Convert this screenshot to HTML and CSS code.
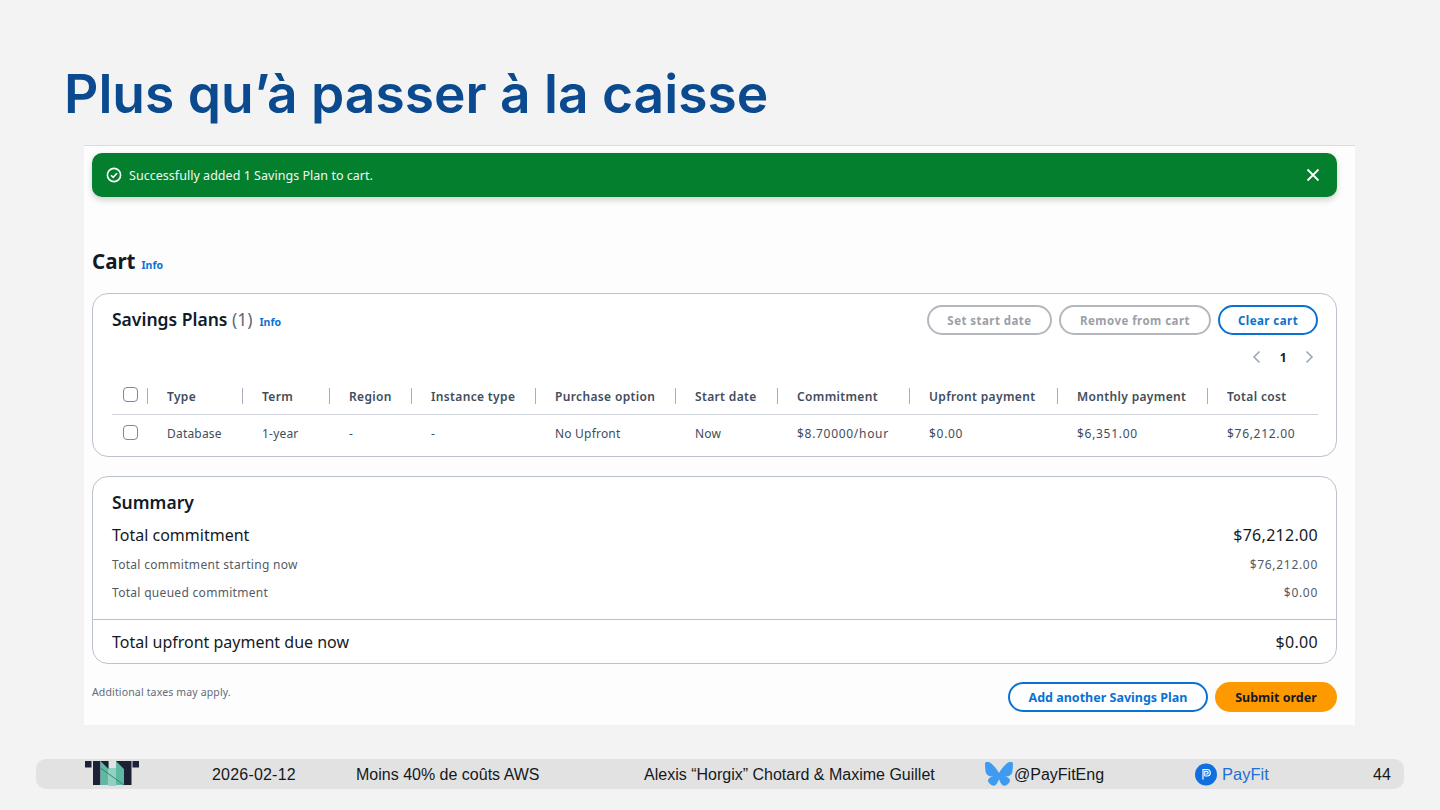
FILE: index.html
```html
<!DOCTYPE html>
<html lang="fr">
<head>
<meta charset="utf-8">
<title>Plus qu’à passer à la caisse</title>
<link rel="stylesheet" href="styles.css">
</head>
<body>
<div class="slide">
  <h1 class="title">Plus qu’à passer à la caisse</h1>
  <main class="shot">
    <div class="flash">
      <svg class="flash-icon" width="16" height="16" viewBox="0 0 16 16" fill="none" stroke="#fff" stroke-width="1.6"><circle cx="8" cy="8" r="6.6"/><path d="M5 8.2l2.2 2.2L11 6.2"/></svg>
      <span class="flash-text">Successfully added 1 Savings Plan to cart.</span>
      <svg class="flash-close" width="14" height="14" viewBox="0 0 14 14" fill="none" stroke="#fff" stroke-width="1.8"><path d="M1.5 1.5l11 11M12.5 1.5l-11 11"/></svg>
    </div>
    <div class="page-head"><h2 class="page-title">Cart</h2><a class="info">Info</a></div>
    <section class="panel plans">
      <div class="plans-head">
        <h3 class="plans-title">Savings Plans <span class="count">(1)</span></h3><a class="info info-small">Info</a>
        <div class="actions">
          <button class="btn btn-off btn-a">Set start date</button>
          <button class="btn btn-off btn-b">Remove from cart</button>
          <button class="btn btn-link btn-c">Clear cart</button>
        </div>
      </div>
      <div class="pager">
        <svg width="9" height="14" viewBox="0 0 9 14" fill="none" stroke="#9ba7b6" stroke-width="1.6"><path d="M7.5 1.5L2 7l5.5 5.5"/></svg>
        <span class="page-num">1</span>
        <svg width="9" height="14" viewBox="0 0 9 14" fill="none" stroke="#9ba7b6" stroke-width="1.6"><path d="M1.5 1.5L7 7l-5.5 5.5"/></svg>
      </div>
      <table class="table">
        <colgroup>
          <col class="c0"><col class="c1"><col class="c2"><col class="c3"><col class="c4"><col class="c5"><col class="c6"><col class="c7"><col class="c8"><col class="c9"><col class="c10">
        </colgroup>
        <thead>
          <tr>
            <th class="sel"><span class="box"></span></th>
            <th>Type</th><th>Term</th><th>Region</th><th>Instance type</th><th>Purchase option</th><th>Start date</th><th>Commitment</th><th>Upfront payment</th><th>Monthly payment</th><th>Total cost</th>
          </tr>
        </thead>
        <tbody>
          <tr>
            <td class="sel"><span class="box"></span></td>
            <td>Database</td><td>1-year</td><td>-</td><td>-</td><td>No Upfront</td><td>Now</td><td class="num">$8.70000/hour</td><td class="num">$0.00</td><td class="num">$6,351.00</td><td class="num">$76,212.00</td>
          </tr>
        </tbody>
      </table>
    </section>
    <section class="panel summary">
      <h3 class="summary-title">Summary</h3>
      <div class="line line-big line-first"><span>Total commitment</span><span class="amount">$76,212.00</span></div>
      <div class="line line-small"><span>Total commitment starting now</span><span class="amount-small">$76,212.00</span></div>
      <div class="line line-small line-last"><span>Total queued commitment</span><span class="amount-small">$0.00</span></div>
      <div class="line line-big line-total"><span>Total upfront payment due now</span><span class="amount">$0.00</span></div>
    </section>
    <div class="bottom">
      <span class="taxes">Additional taxes may apply.</span>
      <div class="bottom-actions">
        <button class="btn btn-link btn-d">Add another Savings Plan</button>
        <button class="btn btn-primary">Submit order</button>
      </div>
    </div>
  </main>
  <footer class="foot">
    <svg class="tnt" width="54" height="25" viewBox="0 0 54 25">
      <rect x="0" y="0" width="6.500" height="6.500" fill="#1d2136"/>
      <rect x="8" y="0" width="7.500" height="24" fill="#1d2136"/>
      <rect x="15.500" y="0" width="8" height="24" fill="#5fb9a2"/>
      <rect x="23.500" y="7" width="7.500" height="18" fill="#8fd2bf"/>
      <rect x="31" y="0" width="8" height="24" fill="#5fb9a2"/>
      <rect x="39" y="0" width="7.500" height="24" fill="#1d2136"/>
      <rect x="47.500" y="0" width="6.500" height="6.500" fill="#1d2136"/>
      <path d="M15.500 0h8v8zM31 0h8v8z" fill="#1d2136"/>
      <path d="M15.500 7l23.500 17" stroke="#2f6f66" stroke-width=".8" fill="none"/>
    </svg>
    <span class="foot-date">2026-02-12</span>
    <span>Moins 40% de coûts AWS</span>
    <span>Alexis “Horgix” Chotard &amp; Maxime Guillet</span>
    <span class="foot-item">
      <svg class="fly" width="28" height="25" viewBox="0 0 28 25"><path fill="#3d9bf2" d="M6 1.3c3.200 2.400 6.600 7.200 8 9.800 1.400-2.600 4.800-7.400 8-9.800 2.300-1.700 6-3 6 1.200 0 .8-.5 7-.8 8-1 3.500-4.500 4.400-7.700 3.900 5.500.9 7 4 3.900 7.100-5.800 5.900-8.300-1.500-9-3.400-.1-.3-.2-.5-.4-.5s-.3.200-.4.500c-.7 1.900-3.200 9.300-9 3.400-3.100-3.100-1.600-6.200 3.900-7.100-3.200.5-6.700-.4-7.700-3.900C.5 9.500 0 3.300 0 2.500 0-1.700 3.700-.4 6 1.300z"/></svg>
      @PayFitEng
    </span>
    <span class="foot-item pf">
      <svg width="22" height="23" viewBox="0 0 22 23"><circle cx="11" cy="11.500" r="11" fill="#1170de"/><path d="M8 16.500V6.500h4a3 3 0 010 6.500H9.700M9.800 13V8.300h2a1.300 1.300 0 010 2.700h-.8" fill="none" stroke="#fff" stroke-width="1.200"/></svg>
      <span class="pf-name">PayFit</span>
    </span>
    <span class="foot-num">44</span>
  </footer>
</div>
</body>
</html>
```

FILE: styles.css
```css
* { box-sizing: border-box; }
html, body { margin: 0; padding: 0; }
body { background: #f3f3f3; font-family: "Noto Sans", sans-serif; color: #0f1b2a; }
.slide { width: 1440px; height: 810px; display: flex; flex-direction: column; overflow: hidden; }
.title { margin: 0; padding: 62px 0 0 64px; height: 145px; font-family: "Inter", sans-serif; font-weight: 600; font-size: 53.300px; line-height: 64px; letter-spacing: 0; color: #0b4a8e; }
.shot { width: 1271px; height: 580px; margin-left: 84px; background: #fdfdfd; border-top: 1px solid #dcdcdc; padding: 7px 18px 0 8px; display: flex; flex-direction: column; }
.flash { height: 44px; border-radius: 10px; background: #037f2e; box-shadow: 0 3px 6px rgba(0, 0, 0, .18); color: #fff; display: flex; align-items: center; padding: 0 17px 0 14px; font-size: 12.500px; letter-spacing: .03px; }
.flash-icon { margin-right: 7px; }
.flash-text { flex: 1; color: #f2f8f3; }
.page-head { margin-top: 49px; height: 29px; display: flex; align-items: center; gap: 6px; }
.page-title { margin: 0; font-size: 20.500px; line-height: 29px; font-weight: 700; position: relative; top: 1px; }
.info { color: #0972d3; font-size: 10.500px; font-weight: 700; position: relative; top: 4px; }
.info-small { margin-left: 7px; top: 2px; }
.panel { border: 1px solid #bcc2cb; border-radius: 16px; background: #fff; }
.plans { margin-top: 18px; height: 164px; padding: 11px 18px 0 19px; }
.plans-head { display: flex; align-items: center; height: 30px; }
.plans-title { margin: 0; font-size: 17.500px; font-weight: 600; line-height: 30px; position: relative; top: -1px; }
.count { font-weight: 400; color: #5f6b7a; }
.actions { margin-left: auto; display: flex; gap: 7px; }
.btn { height: 30px; border-radius: 15px; background: #fff; border: 2px solid; font-family: "Noto Sans", sans-serif; font-size: 11.500px; font-weight: 700; letter-spacing: .45px; padding: 0; }
.btn-off { border-color: #b4b8bd; color: #9ba0a8; }
.btn-link { border-color: #0972d3; color: #0972d3; }
.btn-a { width: 125px; }
.btn-b { width: 152px; }
.btn-c { width: 100px; }
.btn-d { width: 200px; font-size: 12.500px; letter-spacing: 0; }
.btn-primary { width: 122px; border-color: #ff9900; background: #ff9900; color: #0f1b2a; font-size: 12.500px; letter-spacing: 0; }
.pager { margin-top: 9px; height: 26px; display: flex; align-items: center; justify-content: flex-end; gap: 18.500px; padding-right: 4px; }
.page-num { font-size: 12px; font-weight: 700; color: #0f1b2a; }
.table { width: 1206px; table-layout: fixed; border-collapse: collapse; margin-top: 7px; font-size: 12px; color: #414d5c; }
.c0 { width: 36px; } .c1 { width: 95px; } .c2 { width: 87px; } .c3 { width: 82px; } .c4 { width: 124px; }
.c5 { width: 140px; } .c6 { width: 102px; } .c7 { width: 132px; } .c8 { width: 148px; } .c9 { width: 150px; } .c10 { width: 110px; }
.table th { height: 37px; padding: 3px 0 0 19px; text-align: left; font-weight: 600; letter-spacing: .35px; border-bottom: 1px solid #d1d5db; position: relative; }
.table th::after { content: ""; position: absolute; right: 0; top: 11px; height: 16px; width: 1px; background: #a9b0ba; }
.table th:last-child::after { display: none; }
.table td { height: 37px; padding: 2px 0 0 19px; letter-spacing: .2px; }
.table td.num { letter-spacing: .7px; }
.table .sel { padding: 0 0 0 11px; }
.box { display: block; width: 15px; height: 15px; border: 1px solid #7d8998; border-radius: 4px; background: #fff; }
th.sel .box { position: relative; top: -1px; }
.summary { margin-top: 19px; height: 188px; }
.summary-title { margin: 0; padding: 13px 19px 0; font-size: 17.500px; line-height: 24px; font-weight: 600; }
.line { display: flex; justify-content: space-between; padding: 0 18px 0 19px; }
.line-big { font-size: 16px; line-height: 22px; margin-top: 8px; color: #16191f; }
.line-first { margin-top: 10px; }
.line-small { font-size: 12px; letter-spacing: .3px; line-height: 18px; margin-top: 10px; color: #545b64; }
.amount { letter-spacing: .3px; }
.amount-small { letter-spacing: .7px; }
.line-last { padding-bottom: 17px; border-bottom: 1px solid #bcc2cb; }
.line-total { margin-top: 11px; }
.bottom { display: flex; justify-content: space-between; margin-top: 18px; }
.taxes { font-size: 10.500px; letter-spacing: .15px; line-height: 20px; color: #5f6b7a; }
.bottom-actions { display: flex; gap: 7px; }
.foot { position: absolute; left: 36px; top: 759px; width: 1368px; height: 30px; border-radius: 10px; background: #e2e2e2; display: grid; grid-template-columns: 127px 144px 288px 341px 210px 178px 1fr; align-items: center; padding: 1px 0 0 49px; font-family: "Liberation Sans", sans-serif; font-size: 16px; color: #15181c; }
.foot-date { letter-spacing: .2px; }
.tnt { display: block; position: relative; top: -1px; }
.foot-item { display: flex; align-items: center; gap: 1px; }
.pf { gap: 5px; }
.pf-name { color: #1f6ed4; font-size: 16.500px; }
```
